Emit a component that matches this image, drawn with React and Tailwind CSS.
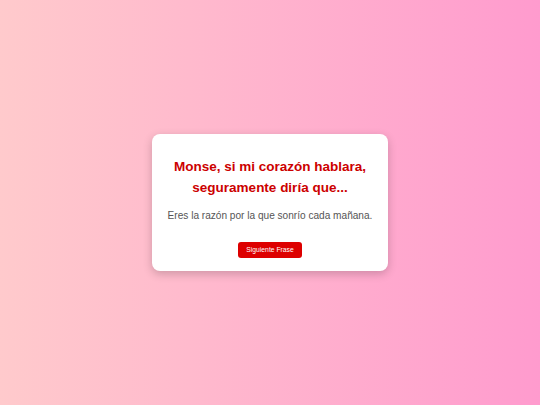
export default function App() {
  return (
    <div
      className="flex h-[405px] w-full items-center justify-center bg-gradient-to-r from-[#ffcacc] to-[#ff9bce]"
      style={{ fontFamily: '"Liberation Sans", Arial, sans-serif' }}
    >
      <div className="w-[236px] rounded-lg bg-white px-[14px] pb-[12px] pt-[22px] text-center shadow-[0_3px_10px_rgba(0,0,0,0.2)]">
        <h1 className="text-[13.5px] font-bold leading-[21px] text-[#cc0000]">
          Monse, si mi corazón hablara, seguramente diría que...
        </h1>
        <p className="mt-[11px] text-[10.1px] leading-[14px] text-[#555]">
          Eres la razón por la que sonrío cada mañana.
        </p>
        <button className="mt-[19px] h-[16px] w-[64px] rounded-[3px] bg-[#dd0000] text-[6.75px] leading-[16px] text-white">
          Siguiente Frase
        </button>
      </div>
    </div>
  );
}
